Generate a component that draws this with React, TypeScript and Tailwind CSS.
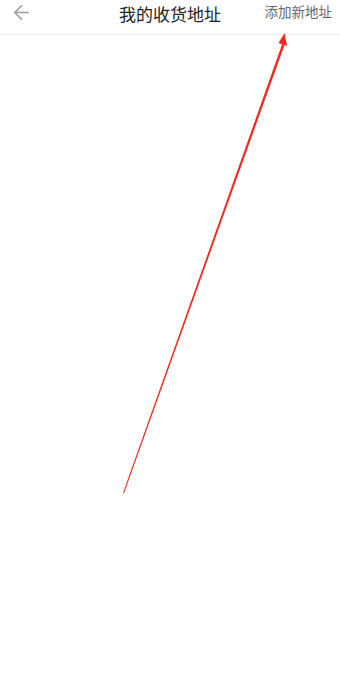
import { ArrowLeft } from "lucide-react";

const font = { fontFamily: '"Noto Sans CJK SC", "Noto Sans", sans-serif' };

function Header() {
  return (
    <div className="flex items-center h-[35px] border-b border-[#f0f0f0] bg-white">
      <div className="w-[84px] pl-[10px] flex items-center -mt-[9px]">
        <ArrowLeft size={23} strokeWidth={1.7} className="text-[#9a9a9a]" />
      </div>
      <div className="flex-1 text-center text-[17px] leading-none text-[#222] -mt-[7px]">
        我的收货地址
      </div>
      <div className="w-[84px] pr-[8px] text-right text-[13.5px] leading-none text-[#666] -mt-[10px] whitespace-nowrap">
        添加新地址
      </div>
    </div>
  );
}

// red annotation arrow drawn over the page
function Annotation() {
  return (
    <svg className="absolute inset-0 pointer-events-none" width="340" height="684" viewBox="0 0 340 684">
      <polygon points="123,493 282.2,44 284.6,44.8 124,493.3" fill="#f0281e" />
      <polygon points="284.5,33 287,46 278.5,43" fill="#f0281e" />
    </svg>
  );
}

export default function App() {
  return (
    <div className="relative w-[340px] h-[684px] bg-white overflow-hidden" style={font}>
      <Header />
      <Annotation />
    </div>
  );
}
